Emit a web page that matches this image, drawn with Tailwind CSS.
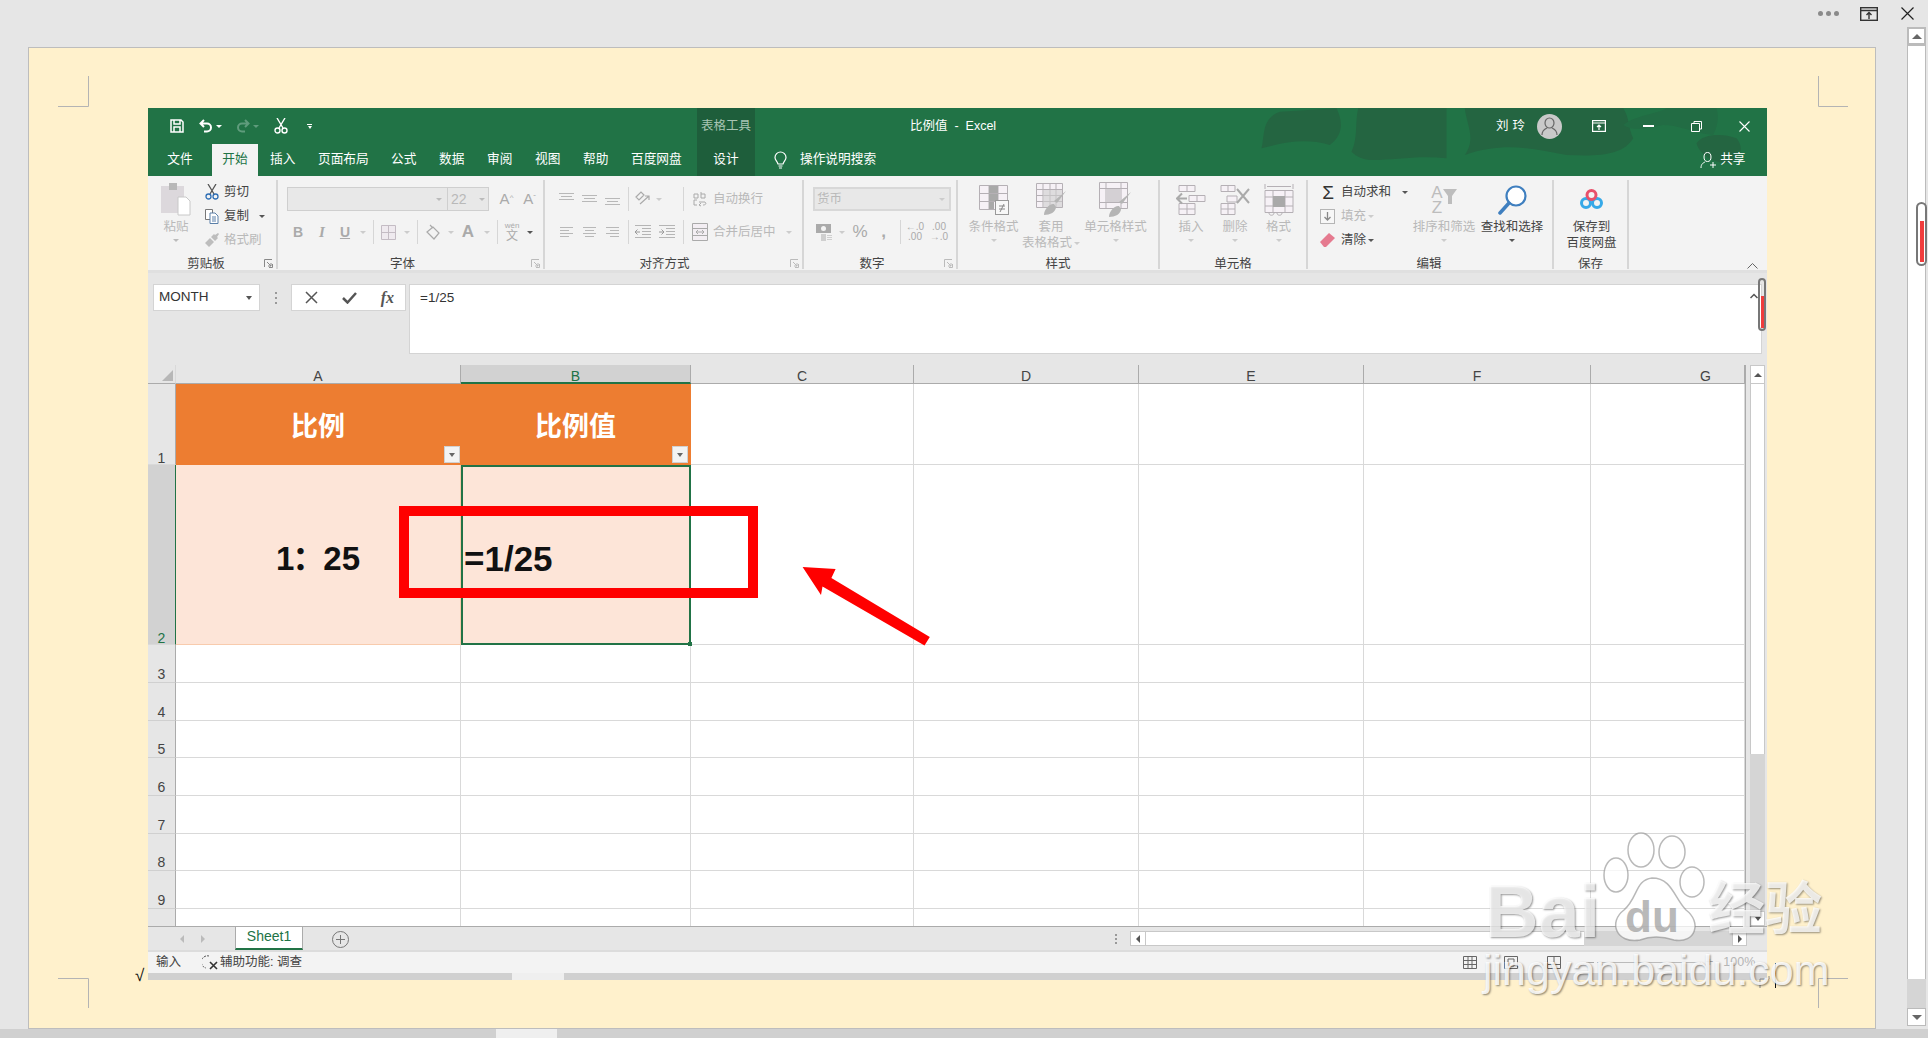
<!DOCTYPE html>
<html lang="zh-CN">
<head>
<meta charset="UTF-8">
<title>比例值 - Excel</title>
<script src="https://cdn.jsdelivr.net/npm/@tailwindcss/browser@4"></script>
</head>
<body class="w-[1928px] h-[1038px] relative overflow-hidden bg-[#e6e6e6] text-[#444] text-[12.5px] font-['Liberation_Sans','Noto_Sans_CJK_SC',sans-serif]">

<!-- top window strip -->
<div class="h-[27px] flex items-center justify-end pr-[14px]">
  <div class="flex gap-[3px] mr-[21px]">
    <i class="w-[5px] h-[5px] rounded-full bg-[#8a8a8a]"></i><i class="w-[5px] h-[5px] rounded-full bg-[#8a8a8a]"></i><i class="w-[5px] h-[5px] rounded-full bg-[#8a8a8a]"></i>
  </div>
  <svg class="w-[18px] h-[14px] mr-[23px]" viewBox="0 0 18 14" fill="none" stroke="#333" stroke-width="1.4"><rect x=".7" y=".7" width="16.6" height="12.6"/><path d="M1 3.5h16M9 12V6M6.5 8 9 5.5 11.5 8"/></svg>
  <svg class="w-[13px] h-[13px]" viewBox="0 0 13 13" stroke="#222" stroke-width="1.2"><path d="M.5.5l12 12M12.500.5l-12 12"/></svg>
</div>

<div class="h-[1002px] flex pl-[28px]">
  <!-- page -->
  <div class="w-[1848px] h-[982px] mt-[20px] bg-[#fff1cc] border border-[#bdbdbd] pl-[119px] pt-[60px]">
    <div class="w-[1619px] h-[872px] flex flex-col">

      <!-- title + tabs -->
      <div class="relative h-[68px] bg-[#217346] overflow-hidden text-white">
        <svg class="absolute left-[1091px] top-[-3px] w-[530px] h-[75px]" viewBox="0 0 1545 225" fill="#246541">
          <path d="M45 130C55 90 45 40 100 20L270 10C290 50 290 90 250 120C180 100 120 110 45 130Z"/>
          <path d="M315 140C335 100 325 50 335 10L600 10L600 160C520 150 440 165 380 165C350 165 330 155 315 140Z"/>
          <path d="M655 150C690 100 660 60 655 10L1130 10C1150 40 1145 70 1160 100C1130 150 1060 155 960 150C860 130 770 110 655 150Z"/>
          <path d="M1130 60C1170 30 1240 25 1260 10L1410 10C1420 40 1410 70 1400 90C1340 85 1300 60 1250 60C1200 70 1160 80 1130 60Z" fill="#226c44"/>
          <path d="M1350 115C1370 85 1430 85 1470 100C1495 130 1480 160 1450 175C1400 175 1360 150 1350 115Z"/>
        </svg>
        <div class="relative h-[36px] flex items-center">
          <div class="flex items-center w-[549px] pl-[22px]">
            <svg class="w-[14px] h-[14px] mr-[15px]" viewBox="0 0 14 14" fill="none" stroke="#fff" stroke-width="1.5"><path d="M1 1h10l2 2v10H1zM4 1v4h6V1M4 13V8h6v5"/></svg>
            <svg class="w-[14px] h-[14px] mr-[3px]" viewBox="0 0 14 14" fill="none" stroke="#fff" stroke-width="2"><path d="M5 1 1.500 4.500 5 8M2 4.500h6a4 4 0 0 1 0 8H5"/></svg>
            <i class="border-x-[3px] border-t-[3px] border-x-transparent border-t-white mr-[14px]"></i>
            <svg class="w-[14px] h-[14px] mr-[3px]" viewBox="0 0 14 14" fill="none" stroke="#5f9c7c" stroke-width="2"><path d="M9 1l3.500 3.500L9 8M12 4.500H6a4 4 0 0 0 0 8h3"/></svg>
            <i class="border-x-[3px] border-t-[3px] border-x-transparent border-t-[#5f9c7c] mr-[15px]"></i>
            <svg class="w-[14px] h-[16px] mr-[19px]" viewBox="0 0 14 16" fill="none" stroke="#fff" stroke-width="1.400"><path d="M3 0l6 10M11 0 5 10"/><circle cx="3.500" cy="12.500" r="2.500"/><circle cx="10.500" cy="12.500" r="2.500"/></svg>
            <span class="w-[5px] flex flex-col items-center gap-[1px]"><i class="w-[5px] h-[1px] bg-white"></i><i class="border-x-[2.500px] border-t-[3px] border-x-transparent border-t-white"></i></span>
          </div>
          <div class="w-[58px] h-[36px] bg-[#1e5e3b] pl-[4px] flex items-center text-[#a8c5b4]">表格工具</div>
          <div class="w-[200px] ml-[155px] whitespace-nowrap">比例值&nbsp; - &nbsp;Excel</div>
          <div class="ml-[386px] flex items-center">
            <span class="tracking-[4px] mr-[8px]">刘玲</span>
            <span class="w-[25px] h-[25px] rounded-full bg-[#c9c9c9] flex items-center justify-center">
              <svg class="w-[17px] h-[19px]" viewBox="0 0 17 19" fill="none" stroke="#666" stroke-width="1.200"><ellipse cx="8.500" cy="6" rx="4.500" ry="5"/><path d="M1 18c0-5 3-6 5-7M16 18c0-5-3-6-5-7"/></svg>
            </span>
            <svg class="w-[14px] h-[12px] ml-[30px]" viewBox="0 0 14 12" fill="none" stroke="#fff" stroke-width="1.200"><rect x=".6" y=".6" width="12.800" height="10.800"/><path d="M1 3h12M7 10V5M5 7l2-2 2 2"/></svg>
            <i class="w-[11px] h-[1.500px] bg-white ml-[37px]"></i>
            <svg class="w-[11px] h-[11px] ml-[37px]" viewBox="0 0 11 11" fill="none" stroke="#fff"><path d="M3 2.500V.5h7.500V8H8.500M.5 2.500H8.500V10.500H.5z"/></svg>
            <svg class="w-[11px] h-[11px] ml-[37px]" viewBox="0 0 11 11" stroke="#fff" stroke-width="1.100"><path d="M.5.5l10 10M10.500.5l-10 10"/></svg>
          </div>
        </div>
        <div class="relative h-[32px] flex items-center text-[12.7px] whitespace-nowrap">
          <span class="w-[64px] text-center">文件</span>
          <span class="w-[46px] h-[32px] bg-[#f3f3f3] text-[#217346] flex items-center justify-center">开始</span>
          <span class="ml-[12px] w-[26px]">插入</span>
          <span class="ml-[22px] w-[51px]">页面布局</span>
          <span class="ml-[22px] w-[26px]">公式</span>
          <span class="ml-[22px] w-[26px]">数据</span>
          <span class="ml-[22px] w-[26px]">审阅</span>
          <span class="ml-[22px] w-[26px]">视图</span>
          <span class="ml-[22px] w-[26px]">帮助</span>
          <span class="ml-[22px] w-[51px]">百度网盘</span>
          <div class="ml-[15px] w-[58px] h-[32px] bg-[#1e5e3b] flex items-center justify-center">设计</div>
          <svg class="w-[13px] h-[19px] ml-[19px]" viewBox="0 0 13 19" fill="none" stroke="#fff" stroke-width="1.200"><path d="M4 13C3 10 1 9 1 6.500a5.500 5.500 0 0 1 11 0C12 9 10 10 9 13zM4.500 15h4M5 17h3"/></svg>
          <span class="ml-[13px]">操作说明搜索</span>
          <svg class="w-[17px] h-[17px] ml-[824px]" viewBox="0 0 17 17" fill="none" stroke="#fff"><ellipse cx="7.500" cy="5" rx="3.500" ry="4.500"/><path d="M1 16c0-4 2-5 4-6M10 10.500M10 13h6M13 10v6"/></svg>
          <span class="ml-[3px]">共享</span>
        </div>
      </div>

      <!-- ribbon -->
      <div class="relative h-[97px] bg-[#f3f3f3] border-b-[3px] border-[#e0e0e0] pt-[4px] flex text-[#b9b9b9] whitespace-nowrap">

        <!-- clipboard -->
        <div class="w-[130px] h-[89px] border-r-2 border-[#d6d6d6] flex flex-col">
          <div class="h-[78px] flex">
            <div class="w-[52px] pl-[4px] flex flex-col items-center">
              <div class="h-[39px] flex items-center justify-center">
                <svg class="w-[30px] h-[33px]" viewBox="0 0 30 33"><rect x="0" y="3" width="23" height="27" fill="#dcd8dc"/><rect x="8" y="0" width="8" height="7" fill="#b8b8b8"/><path d="M17 14h8l4 4v14H17z" fill="#fff" stroke="#c8c8c8"/></svg>
              </div>
              <span class="h-[16px] leading-[16px]">粘贴</span>
              <i class="border-x-[3px] border-t-[3px] border-x-transparent border-t-[#bbb] mt-[4px]"></i>
            </div>
            <div class="pl-[5px] flex flex-col">
              <div class="h-[24px] flex items-center text-[#444]">
                <svg class="w-[14px] h-[16px] mr-[5px]" viewBox="0 0 14 16" fill="none" stroke-width="1.300"><path d="M3 0l6 10M11 0 5 10" stroke="#555"/><circle cx="3.500" cy="12.500" r="2.500" stroke="#2f6fb5"/><circle cx="10.500" cy="12.500" r="2.500" stroke="#2f6fb5"/></svg>剪切
              </div>
              <div class="h-[24px] flex items-center text-[#444]">
                <svg class="w-[14px] h-[16px] mr-[5px]" viewBox="0 0 14 16" fill="#fff" stroke="#777"><path d="M.5 1.500h7v10h-7z"/><path d="M5 5h5l3 3v7.500H5zM7 9h4M7 11h4M7 13h4" stroke="#5a7fa8"/></svg>复制<i class="border-x-[3px] border-t-[3px] border-x-transparent border-t-[#555] ml-[10px]"></i>
              </div>
              <div class="h-[24px] flex items-center">
                <svg class="w-[14px] h-[14px] mr-[5px]" viewBox="0 0 14 14" fill="#bdbdbd"><path d="M0 10l5-5 4 4-5 5zM6 4l3-3 1 1 3-2 1 1-2 3 1 1-3 3z"/></svg>格式刷
              </div>
            </div>
          </div>
          <div class="relative h-[11px] leading-[12px] text-center pl-[2px] pr-[14px] text-[#444]">剪贴板
            <svg class="absolute right-[3px] top-[1px] w-[9px] h-[9px]" viewBox="0 0 9 9" fill="none" stroke="#888"><path d="M.5 8V.5H8M3 3l4 4M7 4v3H4M8.500 5v3.500H5"/></svg>
          </div>
        </div>

        <!-- font -->
        <div class="w-[267px] h-[89px] border-r-2 border-[#d6d6d6] flex flex-col">
          <div class="h-[78px] pl-[8px]">
            <div class="h-[24px] mt-[7px] flex items-center pl-[1px]">
              <div class="w-[161px] h-[24px] bg-[#e8e8e8] border border-[#cfcfcf] flex items-center justify-end pr-[5px]"><i class="border-x-[3px] border-t-[3px] border-x-transparent border-t-[#bbb]"></i></div>
              <div class="w-[41px] h-[24px] bg-[#e8e8e8] border border-l-0 border-[#cfcfcf] flex items-center justify-between px-[3px] text-[14px]">22<i class="border-x-[3px] border-t-[3px] border-x-transparent border-t-[#bbb]"></i></div>
              <span class="ml-[6px] w-[23px] text-[15px] text-[#aaa] text-center">A<sup class="text-[8px]">^</sup></span>
              <span class="w-[23px] text-[15px] text-[#aaa] text-center">A<sup class="text-[8px]">ˇ</sup></span>
            </div>
            <div class="h-[24px] mt-[9px] flex items-center">
              <span class="w-[24px] text-center font-bold text-[14px] text-[#aaa]">B</span>
              <span class="w-[24px] text-center italic font-bold font-['Liberation_Serif',serif] text-[15px] text-[#aaa]">I</span>
              <span class="w-[22px] text-center font-bold underline text-[14px] text-[#aaa]">U</span>
              <span class="w-[14px] flex justify-center"><i class="border-x-[3px] border-t-[3px] border-x-transparent border-t-[#ccc]"></i></span>
              <span class="w-[6px] flex justify-center"><i class="w-px h-[24px] bg-[#d6d6d6]"></i></span>
              <span class="w-[24px] flex justify-center"><svg class="w-[15px] h-[15px]" viewBox="0 0 15 15" fill="#efeaef" stroke="#c4bcc4"><path d="M.5.5h14v14H.5zM7.500.5v14M.5 7.500h14"/></svg></span>
              <span class="w-[14px] flex justify-center"><i class="border-x-[3px] border-t-[3px] border-x-transparent border-t-[#ccc]"></i></span>
              <span class="w-[6px] flex justify-center"><i class="w-px h-[24px] bg-[#d6d6d6]"></i></span>
              <span class="w-[26px] flex justify-center"><svg class="w-[15px] h-[16px]" viewBox="0 0 15 16" fill="#f3f3f3" stroke="#aaa" stroke-width="1.200"><path d="M1 8l6-5 6 6-5 6zM4 1l3 3"/></svg></span>
              <span class="w-[10px] flex justify-center"><i class="border-x-[3px] border-t-[3px] border-x-transparent border-t-[#ccc]"></i></span>
              <span class="w-[24px] text-center font-bold text-[17px] text-[#aaa]">A</span>
              <span class="w-[14px] flex justify-center"><i class="border-x-[3px] border-t-[3px] border-x-transparent border-t-[#ccc]"></i></span>
              <span class="w-[6px] flex justify-center"><i class="w-px h-[24px] bg-[#d6d6d6]"></i></span>
              <span class="w-[24px] flex flex-col items-center text-[#aaa] leading-none"><span class="text-[8px]">wén</span><span class="text-[12px]">文</span></span>
              <span class="w-[12px] flex justify-center"><i class="border-x-[3px] border-t-[3px] border-x-transparent border-t-[#555]"></i></span>
            </div>
          </div>
          <div class="relative h-[11px] leading-[12px] text-center pr-[16px] text-[#444]">字体
            <svg class="absolute right-[3px] top-[1px] w-[9px] h-[9px]" viewBox="0 0 9 9" fill="none" stroke="#bbb"><path d="M.5 8V.5H8M3 3l4 4M7 4v3H4M8.500 5v3.500H5"/></svg>
          </div>
        </div>

        <!-- alignment -->
        <div class="w-[259px] h-[89px] border-r-2 border-[#d6d6d6] flex flex-col">
          <div class="h-[78px] pl-[10px]">
            <div class="h-[24px] mt-[7px] flex items-center">
              <span class="w-[22px] flex justify-center"><svg class="w-[15px] h-[12px]" viewBox="0 0 15 12" stroke="#b8b8b8"><path d="M0 .5h15M2 3.500h11M0 6.500h15"/></svg></span>
              <span class="w-[24px] flex justify-center"><svg class="w-[15px] h-[12px]" viewBox="0 0 15 12" stroke="#b8b8b8"><path d="M0 2.500h15M2 5.500h11M0 8.500h15"/></svg></span>
              <span class="w-[22px] flex justify-center"><svg class="w-[15px] h-[12px]" viewBox="0 0 15 12" stroke="#b8b8b8"><path d="M0 5.500h15M2 8.500h11M0 11.500h15"/></svg></span>
              <span class="w-[10px] flex justify-center"><i class="w-px h-[24px] bg-[#d6d6d6]"></i></span>
              <span class="w-[20px] flex justify-center"><svg class="w-[16px] h-[16px]" viewBox="0 0 16 16" fill="none" stroke="#aaa" stroke-width="1.200"><path d="M1 6l5-5 3 3-5 5zM5 13L14 5M14 9V5h-4"/></svg></span>
              <span class="w-[12px] flex justify-center"><i class="border-x-[3px] border-t-[3px] border-x-transparent border-t-[#ccc]"></i></span>
              <span class="w-[15px]"></span>
              <span class="w-[6px] flex justify-center"><i class="w-px h-[24px] bg-[#d6d6d6]"></i></span>
              <span class="w-[20px] ml-[4px] flex justify-center"><svg class="w-[14px] h-[16px]" viewBox="0 0 14 16" fill="none" stroke="#aaa"><path d="M1 3h4v4H1zM8 1v6h4V3H8M4 9H1v5h3M6 11h6c2 2 0 3-2 3M8 12l-2 2 2 1"/></svg></span>
              <span class="ml-[3px]">自动换行</span>
            </div>
            <div class="h-[24px] mt-[9px] flex items-center">
              <span class="w-[22px] flex justify-center"><svg class="w-[13px] h-[12px]" viewBox="0 0 13 12" stroke="#b8b8b8"><path d="M0 1.500h13M0 4.500h9M0 7.500h13M0 10.500h9"/></svg></span>
              <span class="w-[24px] flex justify-center"><svg class="w-[13px] h-[12px]" viewBox="0 0 13 12" stroke="#b8b8b8"><path d="M0 1.500h13M2 4.500h9M0 7.500h13M2 10.500h9"/></svg></span>
              <span class="w-[22px] flex justify-center"><svg class="w-[13px] h-[12px]" viewBox="0 0 13 12" stroke="#b8b8b8"><path d="M0 1.500h13M4 4.500h9M0 7.500h13M4 10.500h9"/></svg></span>
              <span class="w-[10px] flex justify-center"><i class="w-px h-[24px] bg-[#d6d6d6]"></i></span>
              <span class="w-[20px] flex justify-center"><svg class="w-[16px] h-[14px]" viewBox="0 0 16 14" fill="none" stroke="#b5b5b5"><path d="M0 .5h16M7 3.500h9M7 6.500h9M7 9.500h9M0 12.500h16"/><path d="M5 7H0M2.500 4.500 0 7l2.500 2.500" stroke="#9a9a9a"/></svg></span>
              <span class="w-[4px]"></span>
              <span class="w-[20px] flex justify-center"><svg class="w-[16px] h-[14px]" viewBox="0 0 16 14" fill="none" stroke="#b5b5b5"><path d="M0 .5h16M7 3.500h9M7 6.500h9M7 9.500h9M0 12.500h16"/><path d="M0 7h5M2.500 4.500 5 7 2.500 9.500" stroke="#9a9a9a"/></svg></span>
              <span class="w-[3px]"></span>
              <span class="w-[6px] flex justify-center"><i class="w-px h-[24px] bg-[#d6d6d6]"></i></span>
              <span class="w-[20px] ml-[4px] flex justify-center"><svg class="w-[16px] h-[18px]" viewBox="0 0 16 18" fill="#f3eef3" stroke="#aaa"><path d="M.5.5h15v17H.5zM.5 5.500h15M.5 12.500h15M4 9h8M4 9l2-2M4 9l2 2M12 9l-2-2M12 9l-2 2"/></svg></span>
              <span class="ml-[3px]">合并后居中</span>
              <i class="border-x-[3px] border-t-[3px] border-x-transparent border-t-[#ccc] ml-[10px]"></i>
            </div>
          </div>
          <div class="relative h-[11px] leading-[12px] text-center pr-[18px] text-[#444]">对齐方式
            <svg class="absolute right-[3px] top-[1px] w-[9px] h-[9px]" viewBox="0 0 9 9" fill="none" stroke="#bbb"><path d="M.5 8V.5H8M3 3l4 4M7 4v3H4M8.500 5v3.500H5"/></svg>
          </div>
        </div>

        <!-- number -->
        <div class="w-[154px] h-[89px] border-r-2 border-[#d6d6d6] flex flex-col">
          <div class="h-[78px] pl-[9px]">
            <div class="w-[138px] h-[24px] mt-[7px] bg-[#e8e8e8] border-2 border-[#d8d8d8] flex items-center justify-between pl-[2px] pr-[4px]">货币<i class="border-x-[3px] border-t-[3px] border-x-transparent border-t-[#ccc]"></i></div>
            <div class="h-[24px] mt-[9px] flex items-center">
              <span class="w-[22px] flex justify-center"><svg class="w-[17px] h-[17px]" viewBox="0 0 17 17" fill="#aaa"><path d="M0 0h15v9H0z"/><circle cx="7.500" cy="4.500" r="2.500" fill="#f3f3f3"/><path d="M5 10h5v7H5zM11 11h5v1h-5zM11 13h5v1h-5zM11 15h5v1h-5z" fill="#cfcfcf"/></svg></span>
              <span class="w-[14px] flex justify-center"><i class="border-x-[3px] border-t-[3px] border-x-transparent border-t-[#ccc]"></i></span>
              <span class="w-[22px] text-center text-[17px] text-[#aaa]">%</span>
              <span class="w-[24px] text-center font-bold text-[17px] text-[#aaa] leading-[14px] pl-[1px]">,</span>
              <span class="w-[2px]"></span>
              <span class="w-[6px] flex justify-center"><i class="w-px h-[24px] bg-[#d6d6d6]"></i></span>
              <span class="w-[24px] text-center leading-[10px] text-[10px] text-[#aaa]">←.0<br>.00</span>
              <span class="w-[24px] text-center leading-[10px] text-[10px] text-[#aaa]">.00<br>→.0</span>
            </div>
          </div>
          <div class="relative h-[11px] leading-[12px] text-center pr-[16px] text-[#444]">数字
            <svg class="absolute right-[3px] top-[1px] w-[9px] h-[9px]" viewBox="0 0 9 9" fill="none" stroke="#bbb"><path d="M.5 8V.5H8M3 3l4 4M7 4v3H4M8.500 5v3.500H5"/></svg>
          </div>
        </div>

        <!-- styles -->
        <div class="w-[202px] h-[89px] border-r-2 border-[#d6d6d6] flex flex-col">
          <div class="h-[78px] flex">
            <div class="w-[72px] flex flex-col items-center">
              <div class="h-[39px] flex items-center justify-center">
                <svg class="w-[30px] h-[30px]" viewBox="0 0 30 30" fill="#f6f1f6" stroke="#b5b0b5"><path d="M.5.500h28v24H.5zM.5 8.500h28M.5 16.500h28M10 .5v24M19 .5v24"/><path d="M10 1h9v7h-9zM10 9h9v7h-9zM10 17h5v7h-5z" fill="#a9a9a9" stroke="none"/><rect x="16.500" y="15.500" width="13" height="14" fill="#f8f8f8" stroke="#999"/><path d="M20 21h6M20 24h6M25 19l-4 8" stroke="#888"/></svg>
              </div>
              <span class="h-[16px] leading-[16px]">条件格式</span>
              <i class="border-x-[3px] border-t-[3px] border-x-transparent border-t-[#ccc] mt-[4px]"></i>
            </div>
            <div class="w-[44px] flex flex-col items-center">
              <div class="h-[39px] flex items-center justify-center">
                <svg class="w-[31px] h-[33px]" viewBox="0 0 31 33" fill="#f6f1f6" stroke="#b5b0b5"><path d="M.5.500h26v24H.5zM.5 6.500h26M.5 12.500h26M.5 18.500h26M7 .5v24M14 .5v24M20 .5v24"/><path d="M7 7h19v17H7z" fill="#cfcfcf" fill-opacity=".6" stroke="none"/><path d="M30 8l-9 12-3-2zM8 32c0-6 6-12 10-11l2 3c0 5-6 8-12 8z" fill="#b5b5b5" stroke="none"/></svg>
              </div>
              <span class="h-[16px] leading-[16px]">套用</span>
              <span class="h-[16px] leading-[16px] flex items-center">表格格式<i class="border-x-[3px] border-t-[3px] border-x-transparent border-t-[#ccc] ml-[2px]"></i></span>
            </div>
            <div class="w-[86px] flex flex-col items-center">
              <div class="h-[39px] flex items-center justify-center">
                <svg class="w-[33px] h-[36px]" viewBox="0 0 33 36" fill="#f6f1f6" stroke="#b5b0b5"><path d="M.5.500h28v26H.5zM.5 6.500h28M.5 20.500h28M7 .5v26M22 .5v26"/><path d="M7 7h15v13H7z" fill="#d4d0d4" stroke="none"/><path d="M32 10l-9 12-3-2zM10 35c0-6 6-12 10-11l2 3c0 5-6 8-12 8z" fill="#b5b5b5" stroke="none"/></svg>
              </div>
              <span class="h-[16px] leading-[16px]">单元格样式</span>
              <i class="border-x-[3px] border-t-[3px] border-x-transparent border-t-[#ccc] mt-[4px]"></i>
            </div>
          </div>
          <div class="h-[11px] leading-[12px] text-center text-[#444]">样式</div>
        </div>

        <!-- cells -->
        <div class="w-[148px] h-[89px] border-r-2 border-[#d6d6d6] flex flex-col">
          <div class="h-[78px] flex pl-[9px]">
            <div class="w-[44px] flex flex-col items-center">
              <div class="h-[39px] flex items-center justify-center">
                <svg class="w-[30px] h-[30px]" viewBox="0 0 30 30" fill="#f6f1f6" stroke="#b5b0b5"><path d="M3 .5h16v6H3zM11 .5v6M3 18.500h16v11H3zM3 24h16M11 18.500v11M13 10.500h16v6H13z"/><path d="M21 10.500v6" /><path d="M11 13.500H1M6 8.500l-5 5 5 5" fill="none" stroke="#aaa" stroke-width="2"/></svg>
              </div>
              <span class="h-[16px] leading-[16px]">插入</span>
              <i class="border-x-[3px] border-t-[3px] border-x-transparent border-t-[#ccc] mt-[4px]"></i>
            </div>
            <div class="w-[44px] flex flex-col items-center">
              <div class="h-[39px] flex items-center justify-center">
                <svg class="w-[30px] h-[30px]" viewBox="0 0 30 30" fill="#f6f1f6" stroke="#b5b0b5"><path d="M1 .5h14v6H1zM8 .5v6M1 18.500h14v11H1zM1 24h14M8 18.500v11M7 11h10v6H7z"/><path d="M17 4l12 14M29 4 17 18" stroke="#aaa" stroke-width="2" fill="none"/></svg>
              </div>
              <span class="h-[16px] leading-[16px]">删除</span>
              <i class="border-x-[3px] border-t-[3px] border-x-transparent border-t-[#ccc] mt-[4px]"></i>
            </div>
            <div class="w-[43px] flex flex-col items-center">
              <div class="h-[39px] flex items-center justify-center">
                <svg class="w-[30px] h-[34px]" viewBox="0 0 30 34" fill="#f6f1f6" stroke="#b5b0b5"><path d="M1 1v5M29 1v5M3 3.500h24" fill="none"/><path d="M1 7.500h28v22H1zM1 14h28M1 23h28M9 7.500v22M21 7.500v22"/><path d="M9 13h12v11H9z" fill="#a9a9a9" stroke="none"/><path d="M5 30c0 3 5 3 5 0M13 30c0 3 5 3 5 0" fill="none"/></svg>
              </div>
              <span class="h-[16px] leading-[16px]">格式</span>
              <i class="border-x-[3px] border-t-[3px] border-x-transparent border-t-[#ccc] mt-[4px]"></i>
            </div>
          </div>
          <div class="h-[11px] leading-[12px] text-center text-[#444]">单元格</div>
        </div>

        <!-- editing -->
        <div class="w-[246px] h-[89px] border-r-2 border-[#d6d6d6] flex flex-col">
          <div class="h-[78px] flex">
            <div class="w-[105px] pl-[12px] flex flex-col">
              <div class="h-[24px] flex items-center text-[#444]">
                <span class="w-[16px] text-[19px] text-center leading-none text-[#333]">Σ</span><span class="ml-[5px]">自动求和</span><i class="border-x-[3px] border-t-[3px] border-x-transparent border-t-[#555] ml-[11px]"></i>
              </div>
              <div class="h-[24px] flex items-center">
                <svg class="w-[15px] h-[15px] mr-[6px]" viewBox="0 0 15 15" fill="#f7f7f7" stroke="#b5b5b5"><rect x=".5" y=".5" width="14" height="14"/><path d="M7.500 3v8M4.500 8l3 3 3-3" fill="none" stroke="#888" stroke-width="1.300"/></svg>填充<i class="border-x-[3px] border-t-[3px] border-x-transparent border-t-[#ccc] ml-[2px]"></i>
              </div>
              <div class="h-[24px] flex items-center text-[#444]">
                <svg class="w-[15px] h-[14px] mr-[6px]" viewBox="0 0 15 14"><path d="M0 9l9-9 6 5-9 9H4z" fill="#e57a8f"/></svg>清除<i class="border-x-[3px] border-t-[3px] border-x-transparent border-t-[#555] ml-[2px]"></i>
              </div>
            </div>
            <div class="w-[62px] flex flex-col items-center">
              <div class="h-[39px] flex items-center justify-center">
                <div class="flex items-center text-[#bdbdbd] text-[17px] leading-[15px] text-center"><span>A<br>Z</span><svg class="w-[14px] h-[15px] mb-[6px]" viewBox="0 0 14 15" fill="#bdbdbd"><path d="M0 0h14L9 7v8H5V7z"/></svg></div>
              </div>
              <span class="h-[16px] leading-[16px]">排序和筛选</span>
              <i class="border-x-[3px] border-t-[3px] border-x-transparent border-t-[#ccc] mt-[4px]"></i>
            </div>
            <div class="w-[74px] flex flex-col items-center text-[#444]">
              <div class="h-[39px] flex items-center justify-center">
                <svg class="w-[29px] h-[30px]" viewBox="0 0 29 30" fill="none"><circle cx="18" cy="11" r="9.500" fill="#fff" stroke="#3f7fbf" stroke-width="2.200"/><path d="M11 18 2 28" stroke="#3f7fbf" stroke-width="3.500" stroke-linecap="round"/></svg>
              </div>
              <span class="h-[16px] leading-[16px]">查找和选择</span>
              <i class="border-x-[3px] border-t-[3px] border-x-transparent border-t-[#555] mt-[4px]"></i>
            </div>
          </div>
          <div class="h-[11px] leading-[12px] text-center pr-[2px] text-[#444]">编辑</div>
        </div>

        <!-- baidu save -->
        <div class="w-[75px] h-[89px] border-r-2 border-[#d6d6d6] flex flex-col text-[#444]">
          <div class="h-[78px] flex flex-col items-center pl-[2px]">
            <div class="h-[39px] flex items-center justify-center">
              <svg class="w-[23px] h-[21px]" viewBox="0 0 23 21" fill="none" stroke-width="3"><circle cx="6" cy="14" r="4.500" stroke="#36a9e8"/><circle cx="17" cy="14" r="4.500" stroke="#36a9e8"/><circle cx="11.500" cy="6" r="4.500" stroke="#e8506a"/></svg>
            </div>
            <span class="h-[16px] leading-[16px]">保存到</span>
            <span class="h-[16px] leading-[16px]">百度网盘</span>
          </div>
          <div class="h-[11px] leading-[12px] text-center">保存</div>
        </div>

        <svg class="absolute left-[1599px] top-[87px] w-[11px] h-[6px]" viewBox="0 0 11 6" fill="none" stroke="#666"><path d="M.5 5.500l5-5 5 5"/></svg>
      </div>

      <!-- formula bar -->
      <div class="h-[92px] pt-[11px] pl-[5px] flex items-start bg-[#e6e6e6]">
        <div class="w-[107px] h-[27px] bg-white border border-[#d4d4d4] flex items-center justify-between pl-[5px] pr-[7px] text-[13.500px] text-[#333]">MONTH<i class="border-x-[3.500px] border-t-[4px] border-x-transparent border-t-[#555]"></i></div>
        <div class="w-[31px] h-[27px] flex items-center justify-center"><span class="flex flex-col gap-[3px]"><i class="block w-[2px] h-[2px] bg-[#999]"></i><i class="block w-[2px] h-[2px] bg-[#999]"></i><i class="block w-[2px] h-[2px] bg-[#999]"></i></span></div>
        <div class="w-[115px] h-[27px] bg-white border border-[#d4d4d4] flex items-center justify-between pl-[13px] pr-[11px] text-[#555]">
          <svg class="w-[13px] h-[13px]" viewBox="0 0 13 13" stroke="#555" stroke-width="1.500"><path d="M1 1l11 11M12 1 1 12"/></svg>
          <svg class="w-[15px] h-[12px]" viewBox="0 0 15 12" fill="none" stroke="#555" stroke-width="2.500"><path d="M1 6l4.500 4.500L14 1"/></svg>
          <span class="italic font-bold font-['Liberation_Serif',serif] text-[16px]">fx</span>
        </div>
        <div class="relative w-[1353px] h-[70px] ml-[3px] bg-white border border-[#d4d4d4] pl-[10px] pt-[3px] text-[13.500px] text-[#333]">=1/25
          <svg class="absolute right-[3px] top-[8px] w-[8px] h-[6px]" viewBox="0 0 8 6" fill="none" stroke="#555" stroke-width="1.500"><path d="M.5 5 4 1.500 7.500 5"/></svg>
        </div>
      </div>

      <!-- sheet -->
      <div class="h-[561px] flex">
        <div class="w-[1597px] bg-white grid grid-cols-[28px_285px_230px_223px_225px_225px_227px_154px] grid-rows-[19px_81px_180px_38px_38px_37px_38px_38px_37px_38px_17px] text-[14px] text-[#444] [&>div]:border-r [&>div]:border-b [&>div]:border-[#d9d9d9]">
          <div class="bg-[#e6e6e6] !border-b-[#ababab] flex items-end justify-end pr-[2px] pb-[2px]"><i class="border-l-[11px] border-b-[11px] border-l-transparent border-b-[#b7b7b7]"></i></div>
          <div class="bg-[#e6e6e6] !border-b-[#ababab] !border-r-[#ababab] text-center leading-[22px]">A</div>
          <div class="bg-[#d2d2d2] !border-b-2 !border-b-[#217346] !border-r-[#ababab] text-center leading-[22px] text-[#217346]">B</div>
          <div class="bg-[#e6e6e6] !border-b-[#ababab] !border-r-[#ababab] text-center leading-[22px]">C</div>
          <div class="bg-[#e6e6e6] !border-b-[#ababab] !border-r-[#ababab] text-center leading-[22px]">D</div>
          <div class="bg-[#e6e6e6] !border-b-[#ababab] !border-r-[#ababab] text-center leading-[22px]">E</div>
          <div class="bg-[#e6e6e6] !border-b-[#ababab] !border-r-[#ababab] text-center leading-[22px]">F</div>
          <div class="bg-[#e6e6e6] !border-b-[#ababab] !border-r-[#ababab] pl-[109px] leading-[22px]">G</div>

          <div class="bg-[#e6e6e6] !border-r-[#ababab] flex items-end justify-center leading-[12px]">1</div>
          <div class="relative bg-[#ed7d31] !border-[#ed7d31] flex items-center justify-center text-white font-bold text-[27px] pt-[6px]">比例<span class="absolute right-0 bottom-[1px] w-[16px] h-[17px] bg-[#f3f3f3] border border-[#d0d0d0] flex items-center justify-center"><i class="border-x-[3px] border-t-[4px] border-x-transparent border-t-[#666]"></i></span></div>
          <div class="relative bg-[#ed7d31] !border-[#ed7d31] flex items-center justify-center text-white font-bold text-[27px] pt-[6px]">比例值<span class="absolute right-[2px] bottom-[1px] w-[16px] h-[17px] bg-[#f3f3f3] border border-[#d0d0d0] flex items-center justify-center"><i class="border-x-[3px] border-t-[4px] border-x-transparent border-t-[#666]"></i></span></div>
          <div></div><div></div><div></div><div></div><div></div>

          <div class="bg-[#d2d2d2] !border-r-[#217346] flex items-end justify-center leading-[12px] text-[#217346]">2</div>
          <div class="bg-[#fde5d8] !border-[#f8cbad] flex items-center justify-center pt-[8px] font-bold text-[33px] text-[#111] whitespace-nowrap">1<span class="-mx-[2px]">：</span>25</div>
          <div class="relative bg-[#fde5d8] !border-2 !border-[#217346] flex items-center pl-[1px] pt-[8px] font-bold text-[35px] text-[#111]">=1/25<i class="absolute right-[-3px] bottom-[-3px] w-[4px] h-[4px] bg-[#217346]"></i></div>
          <div></div><div></div><div></div><div></div><div></div>

          <div class="bg-[#e6e6e6] !border-[#ababab] !border-b-[#d0d0d0] flex items-end justify-center leading-[15px]">3</div><div></div><div></div><div></div><div></div><div></div><div></div><div></div>
          <div class="bg-[#e6e6e6] !border-[#ababab] !border-b-[#d0d0d0] flex items-end justify-center leading-[15px]">4</div><div></div><div></div><div></div><div></div><div></div><div></div><div></div>
          <div class="bg-[#e6e6e6] !border-[#ababab] !border-b-[#d0d0d0] flex items-end justify-center leading-[15px]">5</div><div></div><div></div><div></div><div></div><div></div><div></div><div></div>
          <div class="bg-[#e6e6e6] !border-[#ababab] !border-b-[#d0d0d0] flex items-end justify-center leading-[15px]">6</div><div></div><div></div><div></div><div></div><div></div><div></div><div></div>
          <div class="bg-[#e6e6e6] !border-[#ababab] !border-b-[#d0d0d0] flex items-end justify-center leading-[15px]">7</div><div></div><div></div><div></div><div></div><div></div><div></div><div></div>
          <div class="bg-[#e6e6e6] !border-[#ababab] !border-b-[#d0d0d0] flex items-end justify-center leading-[15px]">8</div><div></div><div></div><div></div><div></div><div></div><div></div><div></div>
          <div class="bg-[#e6e6e6] !border-[#ababab] !border-b-[#d0d0d0] flex items-end justify-center leading-[15px]">9</div><div></div><div></div><div></div><div></div><div></div><div></div><div></div>
          <div class="bg-[#e6e6e6] !border-[#ababab] !border-b-0"></div><div class="!border-b-0"></div><div class="!border-b-0"></div><div class="!border-b-0"></div><div class="!border-b-0"></div><div class="!border-b-0"></div><div class="!border-b-0"></div><div class="!border-b-0"></div>
        </div>
        <!-- vertical scrollbar -->
        <div class="w-[22px] border-l border-[#ababab] bg-[#e6e6e6] pl-[4px] flex flex-col">
          <div class="w-[15px] h-[19px] bg-white border border-[#c8c8c8] flex items-center justify-center"><i class="border-x-[4px] border-b-[4px] border-x-transparent border-b-[#555]"></i></div>
          <div class="w-[15px] h-[370px] bg-white border-x border-[#c8c8c8]"></div>
          <div class="w-[15px] flex-1 bg-[#d5d5d5]"></div>
          <div class="w-[15px] h-[15px] bg-white border border-[#c8c8c8] flex items-center justify-center"><i class="border-x-[3px] border-t-[4px] border-x-transparent border-t-[#555]"></i></div>
        </div>
      </div>

      <!-- sheet tabs -->
      <div class="h-[24px] bg-[#e6e6e6] border-t border-[#ababab] flex items-stretch">
        <div class="w-[87px] flex items-center justify-center gap-[17px] pl-[2px]">
          <i class="border-y-[4px] border-r-[4px] border-y-transparent border-r-[#bbb]"></i>
          <i class="border-y-[4px] border-l-[4px] border-y-transparent border-l-[#bbb]"></i>
        </div>
        <div class="w-[68px] h-[23px] bg-white border-x border-[#ababab] border-b-2 border-b-[#217346] text-center text-[14px] leading-[19px] text-[#217346]">Sheet1</div>
        <svg class="w-[17px] h-[17px] ml-[29px] mt-[4px]" viewBox="0 0 17 17" fill="none" stroke="#777"><circle cx="8.500" cy="8.500" r="8"/><path d="M4 8.500h9M8.500 4v9"/></svg>
        <div class="ml-[766px] flex items-center"><span class="flex flex-col gap-[2px]"><i class="block w-[2px] h-[2px] bg-[#999]"></i><i class="block w-[2px] h-[2px] bg-[#999]"></i><i class="block w-[2px] h-[2px] bg-[#999]"></i></span></div>
        <div class="ml-[13px] w-[617px] h-[15px] mt-[4px] flex bg-[#d5d5d5]">
          <div class="w-[16px] bg-white border border-[#c8c8c8] flex items-center justify-center"><i class="border-y-[4px] border-r-[4px] border-y-transparent border-r-[#555]"></i></div>
          <div class="w-[438px] bg-white border-y border-[#c8c8c8]"></div>
          <div class="flex-1"></div>
          <div class="w-[15px] bg-white border border-[#c8c8c8] flex items-center justify-center"><i class="border-y-[4px] border-l-[4px] border-y-transparent border-l-[#555]"></i></div>
        </div>
      </div>

      <!-- status bar -->
      <div class="h-[23px] bg-[#f3f3f3] border-t-2 border-[#dcdcdc] flex items-center text-[12.500px] text-[#444]">
        <span class="ml-[8px]">输入</span>
        <svg class="w-[17px] h-[15px] ml-[21px]" viewBox="0 0 17 15" fill="none" stroke="#555"><path d="M7 1a6 6 0 0 0-3 12" stroke-dasharray="2 1"/><path d="M8 7l7 7M15 7l-7 7" stroke="#333" stroke-width="1.600"/></svg>
        <span class="ml-[1px] w-[85px]">辅助功能: 调查</span>
        <svg class="w-[14px] h-[13px] ml-[1158px]" viewBox="0 0 14 13" fill="none" stroke="#666"><path d="M.5.500h13v12H.5zM.5 4.500h13M.5 8.500h13M5 .5v12M9 .5v12"/></svg>
        <svg class="w-[14px] h-[13px] ml-[27px]" viewBox="0 0 14 13" fill="none" stroke="#666"><path d="M.5.500h13v12H.5zM4 3h6v7H4z"/></svg>
        <svg class="w-[14px] h-[13px] ml-[29px]" viewBox="0 0 14 13" fill="none" stroke="#666"><path d="M.5.500h13v12H.5zM.5 8.500h13M7 .5v8"/></svg>
        <i class="w-[8px] h-px bg-[#aaa] ml-[25px]"></i>
        <i class="w-[104px] h-px bg-[#bbb] ml-[3px]"></i>
        <span class="ml-[5px] text-[#aaa]">+</span>
        <span class="ml-[10px] text-[#b5b5b5]">100%</span>
      </div>

      <!-- bottom stripe -->
      <div class="h-[7px] flex bg-[#d0d0d0]"><div class="w-[364px]"></div><div class="w-[52px] bg-[#efefef]"></div></div>
    </div>
  </div>

  <!-- right scroll strip -->
  <div class="w-[19px] ml-[31px] h-[999px] flex flex-col">
    <div class="h-[19px] bg-white border-2 border-[#bbb] border-b-[3px] flex items-center justify-center"><i class="border-x-[5px] border-b-[5px] border-x-transparent border-b-[#666]"></i></div>
    <div class="h-[933px] bg-white border-x border-[#bbb]"></div>
    <div class="h-[29px] bg-[#d5d5d5]"></div>
    <div class="h-[18px] bg-white border border-[#bbb] flex items-center justify-center"><i class="border-x-[5px] border-t-[5px] border-x-transparent border-t-[#666]"></i></div>
  </div>
</div>

<!-- bottom bar -->
<div class="h-[9px] flex bg-[#d0d0d0]"><div class="w-[496px]"></div><div class="w-[61px] bg-[#efefef]"></div></div>

<!-- annotation overlays -->
<svg class="absolute inset-0 w-[1928px] h-[1038px] pointer-events-none" viewBox="0 0 1928 1038" fill="none" stroke="#b4b4b4">
  <path d="M58 106.500h30.500V76M1818.500 76v30.500H1848M58 978.500h30.500V1008M1818.500 1008v-29.500H1848"/>
  <path d="M1775.500 963v25" stroke="#111"/>
  <path d="M1760 988v-9h9v-3" stroke="#888"/>
  <polygon points="802.600,567 835.600,569 831.400,578 929.800,637 924.500,645.600 822.500,586.600 821,595" fill="#ff0000" stroke="none"/>
</svg>
<div class="absolute left-[399px] top-[506px] w-[359px] h-[92px] border-[10px] border-[#ff0000]"></div>
<span class="absolute left-[135px] top-[966px] text-[17px] leading-[20px] text-[#111]">√</span>

<!-- scroll position markers -->
<div class="absolute left-[1916px] top-[202px] w-[11px] h-[64px] rounded-full border-2 border-[#777] flex justify-center items-end pb-[2px]"><i class="w-[4px] h-[41px] bg-[#f03c3c]"></i></div>
<div class="absolute left-[1758px] top-[278px] w-[8px] h-[53px] rounded-full border-2 border-[#777] flex justify-center items-end pb-[1px]"><i class="w-[3px] h-[32px] bg-[#f03c3c]"></i></div>

<!-- watermark -->
<div class="absolute left-[1483px] top-[842px] w-[350px] h-[155px] pointer-events-none">
  <span class="absolute left-[2px] top-[30px] text-[74px] leading-[80px] font-bold text-white/75 [text-shadow:1px_1px_2px_#0006]">Bai</span>
  <svg class="absolute left-[107px] top-[-12px] w-[120px] h-[120px]" viewBox="0 0 120 120" fill="#ffffff" fill-opacity=".75" stroke="#8a8a8a" stroke-opacity=".6" stroke-width="1.500">
    <ellipse cx="26" cy="45" rx="12" ry="17"/><ellipse cx="51" cy="20" rx="13" ry="17"/><ellipse cx="82" cy="22" rx="13" ry="16"/><ellipse cx="102" cy="52" rx="12" ry="15"/>
    <path d="M62 48C45 50 48 68 34 80C18 92 26 114 50 110C60 106 72 106 84 110C106 114 112 92 96 80C84 68 82 48 62 48Z"/>
  </svg>
  <span class="absolute left-[142px] top-[53px] text-[44px] leading-[44px] font-bold text-[#8a8a8a]/60">du</span>
  <span class="absolute left-[225px] top-[32px] text-[57px] leading-[70px] font-bold text-white/80 [text-shadow:1px_1px_2px_#0006] whitespace-nowrap">经验</span>
  <span class="absolute left-0 top-[103px] text-[43px] leading-[50px] text-white/85 [text-shadow:1px_1px_2px_#0007] whitespace-nowrap">jingyan.baidu.com</span>
</div>
</body>
</html>
